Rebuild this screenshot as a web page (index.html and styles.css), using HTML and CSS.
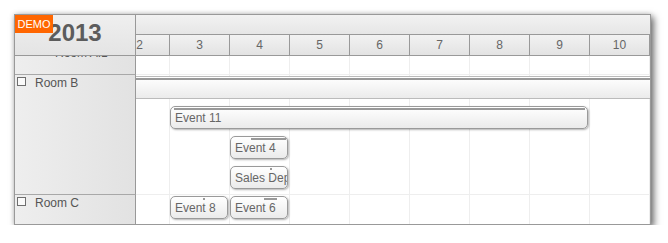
FILE: index.html
```html
<!DOCTYPE html>
<html lang="en">
<head>
    <meta charset="UTF-8">
    <title>Scheduler</title>
    <link rel="stylesheet" href="styles.css">
</head>
<body>
  <div class="scheduler">
    <div class="demo">DEMO</div>

    <div class="top">
      <div class="corner">2013</div>
      <div class="timeline">
        <div class="month-row"></div>
        <div class="day-row">
          <div class="day">2</div>
          <div class="day">3</div>
          <div class="day">4</div>
          <div class="day">5</div>
          <div class="day">6</div>
          <div class="day">7</div>
          <div class="day">8</div>
          <div class="day">9</div>
          <div class="day">10</div>
        </div>
      </div>
    </div>

    <div class="body">
      <div class="rows">
        <div class="row row-a">
          <div class="row-head"><span class="indent">Room A.1</span></div>
          <div class="cells"></div>
        </div>

        <div class="row row-b">
          <div class="row-head"><span class="check"></span>Room B</div>
          <div class="cells">
            <div class="event band" style="top:1px; left:-20px; width:560px;">
              <div class="bar" style="left:0; width:100%;"></div>
            </div>
            <div class="event" style="top:31px; left:34px; width:418px;">
              <div class="bar" style="left:3px; width:411px;"></div>Event 11
            </div>
            <div class="event" style="top:61px; left:94px; width:58px;">
              <div class="bar" style="left:20px; width:35px;"></div>Event 4
            </div>
            <div class="event" style="top:91px; left:94px; width:58px;">
              <div class="bar" style="left:39px; width:2px;"></div>Sales Dept
            </div>
          </div>
        </div>

        <div class="row row-c">
          <div class="row-head"><span class="check"></span>Room C</div>
          <div class="cells">
            <div class="event" style="top:1px; left:34px; width:58px;">
              <div class="bar" style="left:32px; width:2px;"></div>Event 8
            </div>
            <div class="event" style="top:1px; left:94px; width:58px;">
              <div class="bar" style="left:33px; width:13px;"></div>Event 6
            </div>
          </div>
        </div>
      </div>
    </div>
  </div>
</body>
</html>
```

FILE: styles.css
```css
body {
    margin: 0;
    background-color: #ffffff;
    font-family: "Liberation Sans", Arial, sans-serif;
    font-size: 12px;
    color: #666666;
}

.scheduler {
    position: relative;
    margin: 14px 0 0 14px;
    width: 637px;
    border: 1px solid #999999;
    box-sizing: border-box;
    background-color: #ffffff;
    box-shadow: 3px 3px 7px rgba(0, 0, 0, 0.55), 0 0 5px rgba(0, 0, 0, 0.15);
}

.demo {
    position: absolute;
    top: 0;
    left: 0;
    width: 38px;
    height: 18px;
    line-height: 18px;
    text-align: center;
    background-color: #ff6600;
    color: #ffffff;
    font-size: 11px;
    z-index: 5;
}

/* header */
.top {
    display: flex;
    border-bottom: 1px solid #999999;
}
.corner {
    width: 121px;
    height: 40px;
    box-sizing: border-box;
    padding-top: 4px;
    border-right: 1px solid #999999;
    background: linear-gradient(#efefef, #e4e4e4);
    text-align: center;
    font-size: 24px;
    line-height: 28px;
    font-weight: bold;
    color: #5c5c5c;
}
.timeline {
    width: 514px;
    overflow: hidden;
}
.month-row {
    height: 19px;
    border-bottom: 1px solid #999999;
    background: linear-gradient(#f2f2f2, #e6e6e6);
}
.day-row {
    display: flex;
    margin-left: -26px;
}
.day {
    flex: 0 0 59px;
    height: 20px;
    line-height: 20px;
    border-right: 1px solid #999999;
    background: linear-gradient(#f2f2f2, #e3e3e3);
    text-align: center;
}

/* rows */
.body {
    height: 168px;
    overflow: hidden;
}
.rows {
    margin-top: -11px;
}
.row {
    display: flex;
}
.row-head {
    display: flex;
    align-items: flex-start;
    width: 121px;
    box-sizing: border-box;
    padding: 1px 0 0 2px;
    border-right: 1px solid #999999;
    border-bottom: 1px solid #a8a8a8;
    background: linear-gradient(to right, #eeeeee, #e2e2e2);
    line-height: 14px;
    color: #555555;
}
.indent {
    padding-left: 38px;
}
.check {
    width: 7px;
    height: 7px;
    margin: 1px 9px 0 0;
    border: 1px solid #6e6e6e;
    background-color: #fafafa;
}
.cells {
    position: relative;
    width: 514px;
    box-sizing: border-box;
    overflow: hidden;
    border-bottom: 1px solid #eeeeee;
    background: linear-gradient(to right, transparent 59px, #eeeeee 59px);
    background-size: 60px 100%;
    background-position: -26px 0;
}
.row-a .row-head,
.row-a .cells {
    height: 30px;
}
.row-b .row-head,
.row-b .cells {
    height: 120px;
}
.row-c .row-head,
.row-c .cells {
    height: 40px;
}

/* events */
.event {
    position: absolute;
    height: 23px;
    box-sizing: border-box;
    padding: 1px 0 0 4px;
    border: 1px solid #9a9a9a;
    border-radius: 5px;
    background: linear-gradient(#ffffff, #ebebeb);
    box-shadow: 1px 1px 2px rgba(0, 0, 0, 0.3);
    line-height: 20px;
    white-space: nowrap;
    overflow: hidden;
    color: #666666;
}
.event.band {
    border-radius: 0;
    box-shadow: none;
    border-color: #bbbbbb;
}
.bar {
    position: absolute;
    top: 1px;
    height: 2px;
    background-color: #999999;
}
```
